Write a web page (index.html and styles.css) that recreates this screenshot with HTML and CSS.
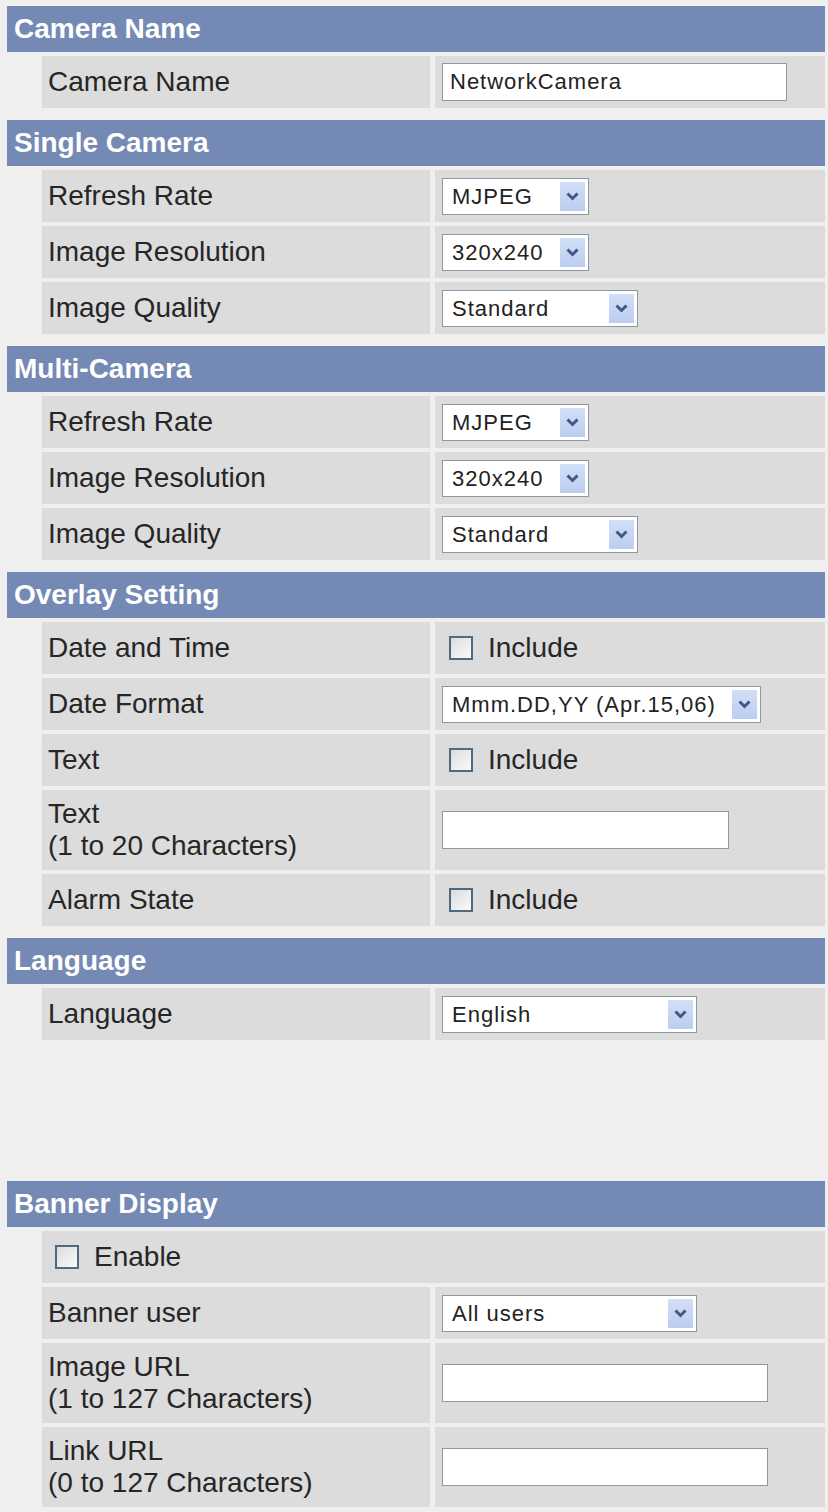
FILE: index.html
```html
<!DOCTYPE html>
<html lang="en">

<head>
    <meta charset="UTF-8">
    <meta name="viewport" content="width=device-width, initial-scale=1.0">
    <title>Camera Setup</title>
    <link rel="stylesheet" href="styles.css">
</head>

<body>
    <div class="page">

        <section class="section">
            <h2 class="section-title">Camera Name</h2>
            <div class="rows">
                <div class="row">
                    <div class="label">Camera Name</div>
                    <div class="value"><input type="text" class="text-input w-name" value="NetworkCamera"></div>
                </div>
            </div>
        </section>

        <section class="section">
            <h2 class="section-title">Single Camera</h2>
            <div class="rows">
                <div class="row">
                    <div class="label">Refresh Rate</div>
                    <div class="value">
                        <div class="select sel-s">
                            <select><option>MJPEG</option></select>
                            <span class="arrow"><svg width="13" height="9" viewBox="0 0 13 9"><polyline points="1.5,1.5 6.5,6.5 11.5,1.5" /></svg></span>
                        </div>
                    </div>
                </div>
                <div class="row">
                    <div class="label">Image Resolution</div>
                    <div class="value">
                        <div class="select sel-s">
                            <select><option>320x240</option></select>
                            <span class="arrow"><svg width="13" height="9" viewBox="0 0 13 9"><polyline points="1.5,1.5 6.5,6.5 11.5,1.5" /></svg></span>
                        </div>
                    </div>
                </div>
                <div class="row">
                    <div class="label">Image Quality</div>
                    <div class="value">
                        <div class="select sel-m">
                            <select><option>Standard</option></select>
                            <span class="arrow"><svg width="13" height="9" viewBox="0 0 13 9"><polyline points="1.5,1.5 6.5,6.5 11.5,1.5" /></svg></span>
                        </div>
                    </div>
                </div>
            </div>
        </section>

        <section class="section">
            <h2 class="section-title">Multi-Camera</h2>
            <div class="rows">
                <div class="row">
                    <div class="label">Refresh Rate</div>
                    <div class="value">
                        <div class="select sel-s">
                            <select><option>MJPEG</option></select>
                            <span class="arrow"><svg width="13" height="9" viewBox="0 0 13 9"><polyline points="1.5,1.5 6.5,6.5 11.5,1.5" /></svg></span>
                        </div>
                    </div>
                </div>
                <div class="row">
                    <div class="label">Image Resolution</div>
                    <div class="value">
                        <div class="select sel-s">
                            <select><option>320x240</option></select>
                            <span class="arrow"><svg width="13" height="9" viewBox="0 0 13 9"><polyline points="1.5,1.5 6.5,6.5 11.5,1.5" /></svg></span>
                        </div>
                    </div>
                </div>
                <div class="row">
                    <div class="label">Image Quality</div>
                    <div class="value">
                        <div class="select sel-m">
                            <select><option>Standard</option></select>
                            <span class="arrow"><svg width="13" height="9" viewBox="0 0 13 9"><polyline points="1.5,1.5 6.5,6.5 11.5,1.5" /></svg></span>
                        </div>
                    </div>
                </div>
            </div>
        </section>

        <section class="section">
            <h2 class="section-title">Overlay Setting</h2>
            <div class="rows">
                <div class="row">
                    <div class="label">Date and Time</div>
                    <div class="value"><label class="check"><input type="checkbox"> Include</label></div>
                </div>
                <div class="row">
                    <div class="label">Date Format</div>
                    <div class="value">
                        <div class="select sel-xl">
                            <select><option>Mmm.DD,YY (Apr.15,06)</option></select>
                            <span class="arrow"><svg width="13" height="9" viewBox="0 0 13 9"><polyline points="1.5,1.5 6.5,6.5 11.5,1.5" /></svg></span>
                        </div>
                    </div>
                </div>
                <div class="row">
                    <div class="label">Text</div>
                    <div class="value"><label class="check"><input type="checkbox"> Include</label></div>
                </div>
                <div class="row tall">
                    <div class="label">Text<br>(1 to 20 Characters)</div>
                    <div class="value"><input type="text" class="text-input w-text"></div>
                </div>
                <div class="row">
                    <div class="label">Alarm State</div>
                    <div class="value"><label class="check"><input type="checkbox"> Include</label></div>
                </div>
            </div>
        </section>

        <section class="section">
            <h2 class="section-title">Language</h2>
            <div class="rows">
                <div class="row">
                    <div class="label">Language</div>
                    <div class="value">
                        <div class="select sel-l">
                            <select><option>English</option></select>
                            <span class="arrow"><svg width="13" height="9" viewBox="0 0 13 9"><polyline points="1.5,1.5 6.5,6.5 11.5,1.5" /></svg></span>
                        </div>
                    </div>
                </div>
            </div>
        </section>

        <div class="spacer"></div>

        <section class="section">
            <h2 class="section-title">Banner Display</h2>
            <div class="rows">
                <div class="row">
                    <div class="label full"><label class="check"><input type="checkbox"> Enable</label></div>
                </div>
                <div class="row">
                    <div class="label">Banner user</div>
                    <div class="value">
                        <div class="select sel-l">
                            <select><option>All users</option></select>
                            <span class="arrow"><svg width="13" height="9" viewBox="0 0 13 9"><polyline points="1.5,1.5 6.5,6.5 11.5,1.5" /></svg></span>
                        </div>
                    </div>
                </div>
                <div class="row tall">
                    <div class="label">Image URL<br>(1 to 127 Characters)</div>
                    <div class="value"><input type="text" class="text-input w-url"></div>
                </div>
                <div class="row tall">
                    <div class="label">Link URL<br>(0 to 127 Characters)</div>
                    <div class="value"><input type="text" class="text-input w-url"></div>
                </div>
            </div>
        </section>

    </div>
</body>

</html>
```

FILE: styles.css
```css
body {
    margin: 0;
    background-color: #efefef;
    font-family: "Liberation Sans", Arial, sans-serif;
    color: #262626;
}

.page {
    padding: 6px 3px 0 7px;
}

.section {
    margin-bottom: 12px;
}

.section-title {
    margin: 0 0 4px;
    height: 46px;
    padding-left: 7px;
    background-color: #7489b4;
    color: #fff;
    font-size: 28px;
    font-weight: bold;
    line-height: 46px;
}

.rows {
    display: flex;
    flex-direction: column;
    gap: 4px;
    margin-left: 35px;
}

.row {
    display: grid;
    grid-template-columns: 388px 1fr;
    column-gap: 5px;
    min-height: 52px;
}

.row.tall {
    min-height: 80px;
}

.label,
.value {
    display: flex;
    align-items: center;
    background-color: #dcdcdc;
}

.label {
    padding-left: 6px;
    font-size: 28px;
    line-height: 32px;
}

.label.full {
    grid-column: 1 / -1;
    padding-left: 13px;
}

.value {
    padding-left: 7px;
}

.text-input {
    box-sizing: border-box;
    height: 38px;
    padding: 0 7px;
    border: 1px solid #8e99a6;
    background: #fff;
    font-family: "Liberation Sans", Arial, sans-serif;
    font-size: 22px;
    letter-spacing: 1px;
    color: #222;
}

.w-name {
    width: 345px;
}

.w-text {
    width: 287px;
}

.w-url {
    width: 326px;
}

.select {
    display: inline-flex;
    box-sizing: border-box;
    height: 37px;
    padding: 3px;
    border: 1px solid #8b97a8;
    background: #fff;
}

.select select {
    appearance: none;
    flex: 1;
    min-width: 0;
    padding: 0 0 0 6px;
    border: none;
    background: transparent;
    font-family: "Liberation Sans", Arial, sans-serif;
    font-size: 22px;
    letter-spacing: 1px;
    color: #222;
    outline: none;
}

.select .arrow {
    display: flex;
    align-items: center;
    justify-content: center;
    width: 25px;
    background: linear-gradient(#d3dff7, #bccdf0);
}

.select .arrow polyline {
    fill: none;
    stroke: #415788;
    stroke-width: 3;
}

.sel-s {
    width: 147px;
}

.sel-m {
    width: 196px;
}

.sel-l {
    width: 255px;
}

.sel-xl {
    width: 319px;
}

.check {
    display: flex;
    align-items: center;
    gap: 15px;
    font-size: 28px;
}

.value .check {
    margin-left: 7px;
}

.check input {
    appearance: none;
    width: 24px;
    height: 24px;
    margin: 0;
    border: 2px solid #52687f;
    background: linear-gradient(135deg, #d9dcdf, #fbfbfb);
}

.spacer {
    height: 129px;
}
```
